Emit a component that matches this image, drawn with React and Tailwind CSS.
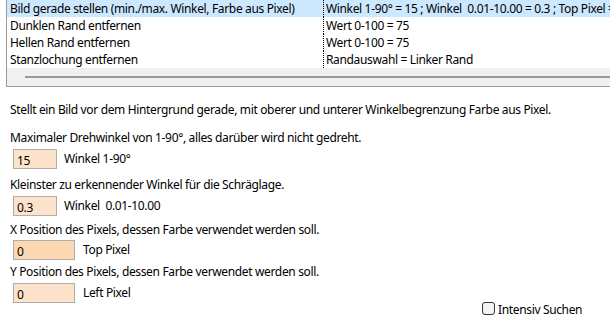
export default function App() {
  const rows = [
    ["Bild gerade stellen (min./max. Winkel, Farbe aus Pixel)", "Winkel 1-90° = 15 ; Winkel  0.01-10.00 = 0.3 ; Top Pixel = 0 ; Left Pixel = 0"],
    ["Dunklen Rand entfernen", "Wert 0-100 = 75"],
    ["Hellen Rand entfernen", "Wert 0-100 = 75"],
    ["Stanzlochung entfernen", "Randauswahl = Linker Rand"],
  ];
  const box = "h-[20px] border border-[#adadad] pl-[3px] leading-[21px] text-[12px] text-black shrink-0";
  const line = "h-[16px] leading-[20px] whitespace-nowrap";
  return (
    <div className="w-[610px] h-[334px] bg-white overflow-hidden text-[12px] tracking-[-0.35px] text-black" style={{ fontFamily: '"Noto Sans", "Segoe UI", sans-serif' }}>
      <div className="ml-[6px] h-[87px] border-l border-b border-[#9a9a9a] flex flex-col">
        <div className="flex flex-col">
          {rows.map((r, i) => (
            <div key={i} className={`flex h-[17px] leading-[18px] whitespace-pre ${i === 0 ? "bg-[#cce8ff]" : ""}`}>
              <div className="w-[316px] pl-[3px] shrink-0 overflow-hidden">{r[0]}</div>
              <div className="border-l border-dotted border-black pl-[2px] overflow-hidden">{r[1]}</div>
            </div>
          ))}
        </div>
        <div className="flex-1 bg-[#f0f0f0] flex items-center pl-[18px]">
          <div className="h-[2px] flex-1 bg-[#999999]" />
        </div>
      </div>
      <div className="pl-[10px] pt-[13px] flex flex-col">
        <div className={line}>Stellt ein Bild vor dem Hintergrund gerade, mit oberer und unterer Winkelbegrenzung Farbe aus Pixel.</div>
        <div className={`${line} mt-[12px]`}>Maximaler Drehwinkel von 1-90°, alles darüber wird nicht gedreht.</div>
        <div className="flex items-center h-[20px] mt-[5px] ml-[3px]">
          <div className={`${box} w-[44px] bg-[#fde3ca]`}>15</div>
          <span className="ml-[7px] leading-[14px]">Winkel 1-90°</span>
        </div>
        <div className={`${line} mt-[6px]`}>Kleinster zu erkennender Winkel für die Schräglage.</div>
        <div className="flex items-center h-[20px] mt-[5px] ml-[3px]">
          <div className={`${box} w-[44px] bg-[#fde3ca]`}>0.3</div>
          <span className="ml-[7px] leading-[14px] whitespace-pre">Winkel  0.01-10.00</span>
        </div>
        <div className={`${line} mt-[4px]`}>X Position des Pixels, dessen Farbe verwendet werden soll.</div>
        <div className="flex items-center h-[20px] mt-[4px] ml-[3px]">
          <div className={`${box} w-[62px] bg-[#fcd7b2]`}>0</div>
          <span className="ml-[8px] leading-[14px]">Top Pixel</span>
        </div>
        <div className={`${line} mt-[2px]`}>Y Position des Pixels, dessen Farbe verwendet werden soll.</div>
        <div className="flex items-center h-[20px] mt-[5px] ml-[3px]">
          <div className={`${box} w-[62px] bg-[#fde3ca]`}>0</div>
          <span className="ml-[8px] leading-[14px]">Left Pixel</span>
        </div>
        <div className="flex items-start h-[16px] ml-[472px] -mt-[2px]">
          <div className="w-[13px] h-[13px] mt-[1px] border border-[#333] rounded-[3px] bg-[#f4f4f4] shrink-0" />
          <span className="ml-[3px] leading-[17px]">Intensiv Suchen</span>
        </div>
      </div>
    </div>
  );
}
